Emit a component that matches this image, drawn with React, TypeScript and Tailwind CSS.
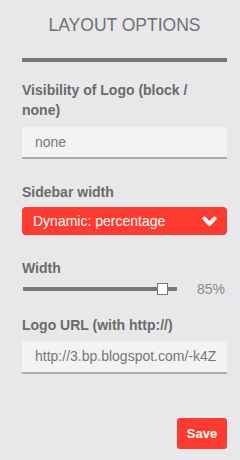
export default function App() {
  return (
    <div
      className="w-[240px] h-[460px] bg-[#e8e8ea] pl-[22px] pr-[13px] flex flex-col text-[#6b6b6b]"
      style={{ fontFamily: '"Liberation Sans", Arial, sans-serif' }}
    >
      {/* TITLE */}
      <h1 className="pt-[14px] text-center text-[17.5px] leading-[22px] text-[#707070] font-normal">
        LAYOUT OPTIONS
      </h1>
      <div className="mt-[22px] h-[4px] w-full bg-[#777777]" />

      {/* LOGO VISIBILITY */}
      <label className="mt-[18px] text-[14px] leading-[20px] font-bold text-[#6b6b6b]">
        Visibility of Logo (block / none)
      </label>
      <div className="mt-[7px] h-[32px] bg-[#f3f3f3] border-b-2 border-[#acacac] flex items-center pl-[13px] text-[14px] text-[#777]">
        none
      </div>

      {/* SIDEBAR WIDTH */}
      <label className="mt-[23px] text-[14px] leading-[20px] font-bold">Sidebar width</label>
      <div className="mt-[5px] h-[28px] rounded-[4px] bg-[#ff3a2f] flex items-center justify-between pl-[11px] pr-[10px] text-white text-[14px]">
        <span>Dynamic: percentage</span>
        <svg width="15" height="13" viewBox="0 0 15 13">
          <path d="M2.5 3.5 L7.5 8.8 L12.5 3.5" fill="none" stroke="#fff" strokeWidth="4" strokeLinecap="round" strokeLinejoin="round" />
        </svg>
      </div>

      {/* WIDTH SLIDER */}
      <label className="mt-[23px] text-[14px] leading-[20px] font-bold">Width</label>
      <div className="mt-[4px] h-[14px] flex items-center">
        <div className="relative ml-[1px] w-[154px] h-[4px] bg-[#777777]">
          <div className="absolute left-[134px] top-[-4px] w-[11px] h-[12px] bg-white border border-[#777]" />
        </div>
        <span className="ml-auto mr-[2px] text-[14px] text-[#888]">85%</span>
      </div>

      {/* LOGO URL */}
      <label className="mt-[19px] text-[14px] leading-[20px] font-bold">Logo URL (with http://)</label>
      <div className="mt-[6px] h-[33px] bg-[#f3f3f3] border-b-2 border-[#acacac] flex items-center pl-[13px] text-[14px] text-[#777] overflow-hidden whitespace-nowrap">
        http://3.bp.blogspot.com/-k4Z
      </div>

      <button className="mt-[44px] self-end w-[50px] h-[31px] rounded-[3px] bg-[#ff3a2f] text-white text-[13px] font-bold">
        Save
      </button>
    </div>
  );
}
